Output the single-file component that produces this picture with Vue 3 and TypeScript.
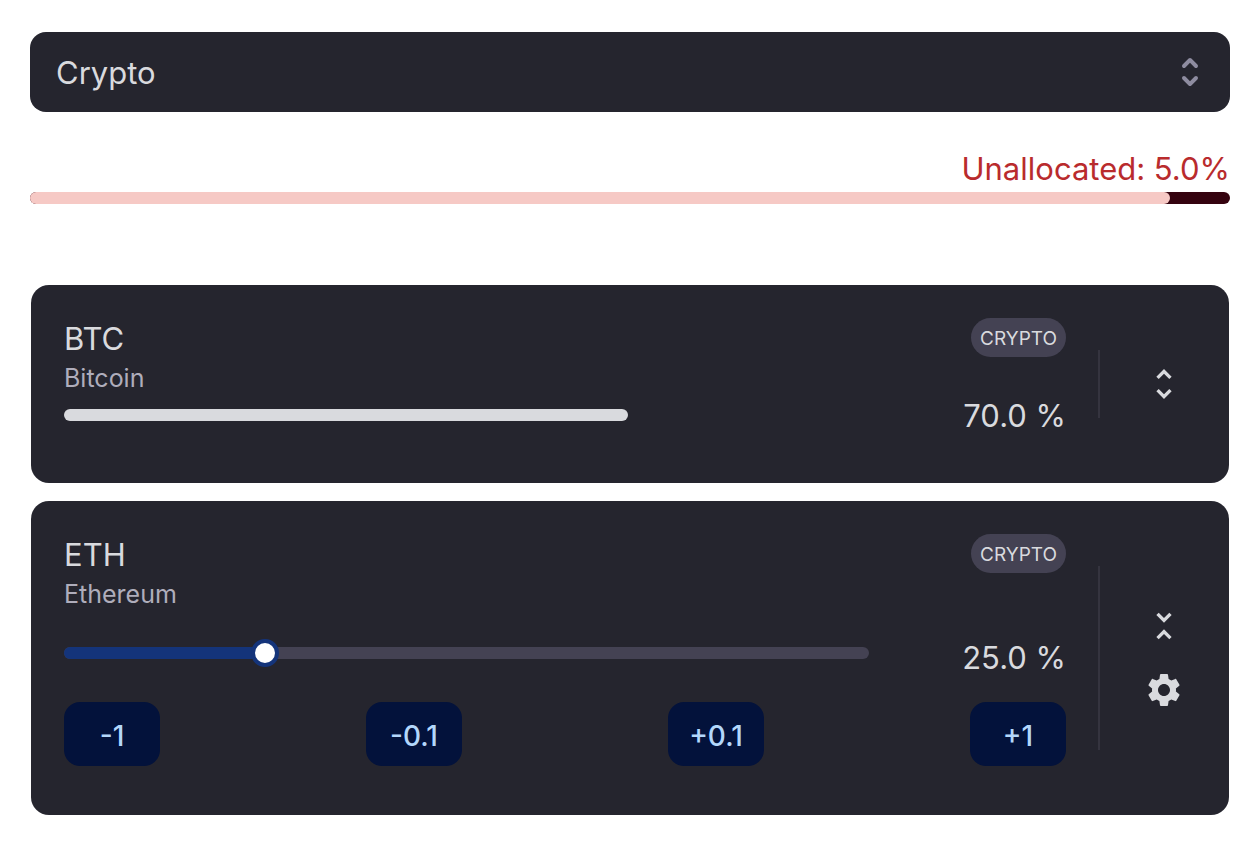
<script setup lang="ts">
import { computed, ref } from 'vue'

interface Asset {
  symbol: string
  name: string
  kind: string
  share: number
  open: boolean
}

const category = ref('Crypto')
const assets = ref<Asset[]>([
  { symbol: 'BTC', name: 'Bitcoin', kind: 'CRYPTO', share: 70, open: false },
  { symbol: 'ETH', name: 'Ethereum', kind: 'CRYPTO', share: 25, open: true },
])
const steps = [-1, -0.1, 0.1, 1]

const allocated = computed(() => assets.value.reduce((sum, a) => sum + a.share, 0))

function nudge(asset: Asset, step: number) {
  asset.share = Math.min(100, Math.max(0, Math.round((asset.share + step) * 10) / 10))
}
function label(step: number) {
  return step > 0 ? `+${step}` : `${step}`
}
</script>

<template>
  <main class="page">
    <div class="picker">
      <select v-model="category" class="picker-select" aria-label="Category">
        <option>Crypto</option>
      </select>
      <svg class="picker-icon" viewBox="0 0 20 20" aria-hidden="true">
        <path d="M10 3a1 1 0 01.707.293l3 3a1 1 0 01-1.414 1.414L10 5.414 7.707 7.707a1 1 0 01-1.414-1.414l3-3A1 1 0 0110 3zm-3.707 9.293a1 1 0 011.414 0L10 14.586l2.293-2.293a1 1 0 011.414 1.414l-3 3a1 1 0 01-1.414 0l-3-3a1 1 0 010-1.414z" />
      </svg>
    </div>

    <section class="total">
      <p class="total-label">Unallocated: {{ (100 - allocated).toFixed(1) }}%</p>
      <div class="total-track">
        <div class="total-fill" :style="{ width: allocated + '%' }"></div>
      </div>
    </section>

    <section class="cards">
      <article v-for="asset in assets" :key="asset.symbol" class="card">
        <div class="content">
          <header class="head">
            <div>
              <h2 class="symbol">{{ asset.symbol }}</h2>
              <p class="name">{{ asset.name }}</p>
            </div>
            <span class="badge">{{ asset.kind }}</span>
          </header>

          <div class="body" :class="{ 'body-open': asset.open }">
            <div v-if="asset.open" class="slider">
              <div class="slider-track">
                <div class="slider-fill" :style="{ width: asset.share + '%' }"></div>
              </div>
              <input
                v-model.number="asset.share"
                class="slider-input"
                type="range"
                min="0"
                max="100"
                step="0.1"
                :aria-label="asset.name + ' share'"
              />
            </div>
            <div v-else class="meter">
              <div class="meter-fill" :style="{ width: asset.share + '%' }"></div>
            </div>
            <span class="value">{{ asset.share.toFixed(1) }} %</span>
          </div>

          <div v-if="asset.open" class="steps">
            <button v-for="step in steps" :key="step" type="button" class="step" @click="nudge(asset, step)">
              {{ label(step) }}
            </button>
          </div>
        </div>

        <div class="actions">
          <button type="button" class="action" :aria-label="asset.open ? 'Collapse' : 'Expand'" @click="asset.open = !asset.open">
            <svg class="action-icon" viewBox="0 0 24 24" aria-hidden="true">
              <path v-if="asset.open" d="M7.41 18.59L8.83 20 12 16.83 15.17 20l1.41-1.41L12 14l-4.59 4.59zm9.18-13.18L15.17 4 12 7.17 8.83 4 7.41 5.41 12 10l4.59-4.59z" />
              <path v-else d="M12 5.83L15.17 9l1.41-1.41L12 3 7.41 7.59 8.83 9 12 5.83zm0 12.34L8.83 15l-1.41 1.41L12 21l4.59-4.59L15.17 15 12 18.17z" />
            </svg>
          </button>
          <button v-if="asset.open" type="button" class="action" aria-label="Settings">
            <svg class="action-icon" viewBox="0 0 24 24" aria-hidden="true">
              <path d="M19.14 12.94c.04-.3.06-.61.06-.94 0-.32-.02-.64-.07-.94l2.03-1.58c.18-.14.23-.41.12-.61l-1.92-3.32c-.12-.22-.37-.29-.59-.22l-2.39.96c-.5-.38-1.03-.7-1.62-.94l-.36-2.54c-.04-.24-.24-.41-.48-.41h-3.84c-.24 0-.43.17-.47.41l-.36 2.54c-.59.24-1.13.57-1.62.94l-2.39-.96c-.22-.08-.47 0-.59.22L2.74 8.87c-.12.21-.08.47.12.61l2.03 1.58c-.05.3-.09.63-.09.94s.02.64.07.94l-2.03 1.58c-.18.14-.23.41-.12.61l1.92 3.32c.12.22.37.29.59.22l2.39-.96c.5.38 1.03.7 1.62.94l.36 2.54c.05.24.24.41.48.41h3.84c.24 0 .44-.17.47-.41l.36-2.54c.59-.24 1.13-.56 1.62-.94l2.39.96c.22.08.47 0 .59-.22l1.92-3.32c.12-.22.07-.47-.12-.61l-2.01-1.58zM12 15.6c-1.98 0-3.6-1.62-3.6-3.6s1.62-3.6 3.6-3.6 3.6 1.62 3.6 3.6-1.62 3.6-3.6 3.6z" />
            </svg>
          </button>
        </div>
      </article>
    </section>
  </main>
</template>

<style>
body {
  margin: 0;
  background: #fff;
}
</style>

<style scoped>
.page {
  box-sizing: border-box;
  padding: 32px 30px;
  font-family: Inter, "Liberation Sans", sans-serif;
  color: #d9dade;
}
.picker {
  position: relative;
}
.picker-select {
  display: block;
  box-sizing: border-box;
  width: 100%;
  height: 80px;
  padding: 0 80px 0 26px;
  border: 0;
  border-radius: 16px;
  appearance: none;
  background: #25252e;
  color: #d9dade;
  font: inherit;
  font-size: 31px;
}
.picker-icon {
  position: absolute;
  top: 20px;
  right: 20px;
  width: 40px;
  height: 40px;
  fill: #8e8ca0;
  pointer-events: none;
}
.total {
  margin-top: 37px;
}
.total-label {
  margin: 0 0 3px;
  color: #b92b2d;
  font-size: 31px;
  line-height: 40px;
  text-align: right;
}
.total-track {
  height: 12px;
  border-radius: 6px;
  overflow: hidden;
  background: #35030f;
}
.total-fill {
  height: 100%;
  border-radius: 0 6px 6px 0;
  background: #f6c9c5;
}
.cards {
  display: flex;
  flex-direction: column;
  gap: 18px;
  margin: 81px 1px 0;
}
.card {
  display: flex;
  padding: 33px 1px 49px 33px;
  border-radius: 18px;
  background: #25252e;
}
.content {
  flex: 1;
  min-width: 0;
}
.head {
  display: flex;
  justify-content: space-between;
  align-items: flex-start;
}
.symbol {
  margin: 0;
  font-size: 31px;
  font-weight: 400;
  line-height: 42px;
}
.name {
  margin: 0;
  color: #afadbb;
  font-size: 25px;
  line-height: 36px;
}
.badge {
  padding: 2px 9px 0;
  border-radius: 20px;
  background: #444253;
  font-size: 19px;
  line-height: 37px;
}
.body {
  display: flex;
  align-items: center;
}
.body-open {
  align-items: flex-start;
  margin-top: 24px;
}
.meter,
.slider {
  flex: 1;
}
.meter-fill {
  height: 12px;
  border-radius: 6px;
  background: #d9dade;
}
.slider {
  display: grid;
  align-items: center;
  height: 34px;
}
.slider-track,
.slider-input {
  grid-area: 1 / 1;
}
.slider-track {
  height: 12px;
  border-radius: 6px;
  overflow: hidden;
  background: #444253;
}
.slider-fill {
  height: 100%;
  background: #14347a;
}
.slider-input {
  height: 28px;
  margin: 0 -14px;
  appearance: none;
  background: transparent;
}
.slider-input::-webkit-slider-thumb {
  box-sizing: border-box;
  width: 28px;
  height: 28px;
  border: 4px solid #14347a;
  border-radius: 50%;
  appearance: none;
  background: #fff;
}
.value {
  width: 197px;
  padding-top: 2px;
  font-size: 31px;
  line-height: 36px;
  text-align: right;
}
.body-open .value {
  line-height: 40px;
}
.steps {
  display: flex;
  justify-content: space-between;
  margin-top: 24px;
}
.step {
  width: 96px;
  height: 64px;
  padding: 3px 0 0;
  border: 0;
  border-radius: 16px;
  background: #03123b;
  color: #b3d7fb;
  font: inherit;
  font-size: 28px;
  font-weight: 500;
}
.actions {
  box-sizing: border-box;
  display: flex;
  flex-direction: column;
  align-items: center;
  justify-content: center;
  width: 130px;
  margin: 32px 0 16px 32px;
  border-left: 2px solid #35343f;
}
.action {
  display: grid;
  place-items: center;
  width: 64px;
  height: 64px;
  padding: 0;
  border: 0;
  background: none;
}
.action-icon {
  width: 40px;
  height: 40px;
  fill: #d9dade;
}
</style>
